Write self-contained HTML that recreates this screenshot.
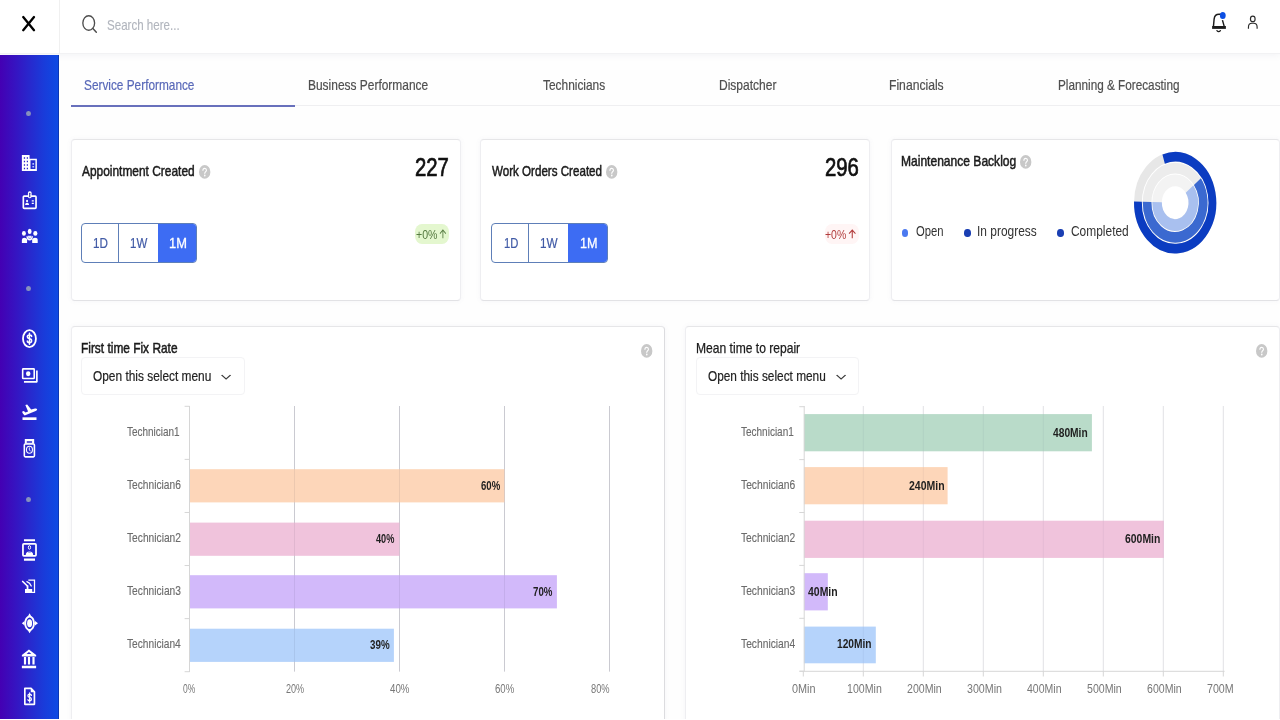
<!DOCTYPE html><html lang="en"><head><meta charset="utf-8"><title>Service Performance</title><style>
*{box-sizing:border-box;margin:0;padding:0}
html,body{width:1280px;height:720px;overflow:hidden;background:#fff}
body{font-family:"Liberation Sans",sans-serif;position:relative}
#app{position:absolute;left:0;top:0;width:1280px;height:720px;overflow:hidden;background:#fefefe}
.t{position:absolute;white-space:nowrap;line-height:1;transform-origin:0 0;font-weight:normal;font-style:normal;display:block;margin:0;padding:0}
.ic{position:absolute;display:block;overflow:visible}
header{position:absolute;left:0;top:0;width:1280px;height:54px;background:#fff;border-bottom:1px solid #f2f2f4;box-shadow:0 1px 7px rgba(110,120,150,.09)}
.logo{position:absolute;left:0;top:0;width:60px;height:54px;border-right:1px solid #f0f0f0}
nav.side{position:absolute;left:0;top:55px;width:59px;height:663.6px;background:linear-gradient(90deg,#4400b3 0%,#3515c2 28%,#2828cd 50%,#193cda 75%,#0d4be4 100%);box-shadow:inset -1px 0 0 rgba(10,30,120,.45)}
.dot{position:absolute;left:26.2px;width:4.6px;height:5.2px;border-radius:50%;background:#8791bd;filter:blur(.4px)}
.tabs{position:absolute;left:71px;top:62px;width:1209px;height:44px;border-bottom:1px solid #efeff1;list-style:none}
.tabs .on{position:absolute;left:0;top:42.8px;width:224px;height:2.1px;background:#6870bc}
.card{position:absolute;background:#fff;border:1px solid #eeeef1;border-top-color:#e6e6e8;border-bottom-color:#e2e2e5;border-radius:4px;box-shadow:0 0 5px rgba(110,120,160,.07)}
.bg{position:absolute;top:223.4px;height:39.8px;border:1px solid #5e7fb8;border-radius:4px;background:#fff;overflow:hidden}
.bg i{position:absolute;top:0;height:100%;display:block}
.bg .dv{width:1px;background:#5e7fb8}
.bg .act{background:#3d6cf3}
.badge{position:absolute;border-radius:7px/8px;filter:blur(.5px)}
.sel{position:absolute;top:357.2px;height:38px;border:1px solid #f3f3f5;border-radius:4px;background:#fff}
.bar{position:absolute}
.edge{position:absolute;left:0;top:718.6px;width:1280px;height:1.4px;background:#fff}
.gl{position:absolute;width:1px}
.ax{position:absolute;background:#d9d9d9}
.ldot{position:absolute;top:229px;width:6.4px;height:7.6px;border-radius:50%}
</style></head><body><div id="app">
<main>
<ul class="tabs"><li class="on"></li></ul>
<span class="t" style="left:84.21px;top:78px;font-size:14.5px;color:#5868b8;-webkit-text-stroke:0.2px #5868b8;transform:scaleX(0.8158);">Service Performance</span><span class="t" style="left:308.39px;top:78px;font-size:14.5px;color:#4f4f4f;-webkit-text-stroke:0.2px #4f4f4f;transform:scaleX(0.8238);">Business Performance</span><span class="t" style="left:543.32px;top:78px;font-size:14.5px;color:#4f4f4f;-webkit-text-stroke:0.2px #4f4f4f;transform:scaleX(0.8206);">Technicians</span><span class="t" style="left:719.29px;top:78px;font-size:14.5px;color:#4f4f4f;-webkit-text-stroke:0.2px #4f4f4f;transform:scaleX(0.8292);">Dispatcher</span><span class="t" style="left:889.38px;top:78px;font-size:14.5px;color:#4f4f4f;-webkit-text-stroke:0.2px #4f4f4f;transform:scaleX(0.8379);">Financials</span><span class="t" style="left:1058.15px;top:78px;font-size:14.5px;color:#4f4f4f;-webkit-text-stroke:0.2px #4f4f4f;transform:scaleX(0.8101);">Planning &amp; Forecasting</span>
<section class="card" style="left:70.5px;top:138.6px;width:390px;height:162px"></section>
<section class="card" style="left:480.4px;top:138.6px;width:389.6px;height:162px"></section>
<section class="card" style="left:890.5px;top:138.6px;width:389.2px;height:162px"></section>
<h3 class="t" style="left:81.60px;top:164px;font-size:14.5px;color:#1b1b1b;-webkit-text-stroke:0.5px #1b1b1b;transform:scaleX(0.8220);">Appointment Created</h3><svg class="ic" style="left:199.1px;top:164.7px;width:11.4px;height:13.8px" viewBox="0 0 24 24" preserveAspectRatio="none"><circle cx="12" cy="12" r="12" fill="#c8c8c8"/><path fill="none" stroke="#fff" stroke-width="2.300" stroke-linecap="round" d="M8.300 9.300c0-2.100 1.600-3.500 3.700-3.500s3.700 1.300 3.700 3.300c0 2.500-3.500 2.800-3.500 5.400"/><circle cx="12.200" cy="18.300" r="1.700" fill="#fff"/></svg><strong class="t" style="left:414.77px;top:155px;font-size:25.0px;color:#111;-webkit-text-stroke:0.7px #111;transform:scaleX(0.8131);">227</strong>
<div class="badge" style="left:415px;top:223.6px;width:34.4px;height:20.8px;background:#e4f7cf"></div><span class="t" style="left:415.88px;top:228px;font-size:13.4px;color:#557a40;transform:scaleX(0.7909);">+0%</span>
<svg class="ic" style="left:439.3px;top:229.0px;width:7.8px;height:9.6px" viewBox="0 0 24 24" preserveAspectRatio="none" ><path fill="none" stroke="#557a40" stroke-width="2.600" d="M12 23V3M3 11.500L12 2.500l9 9"/></svg>
<h3 class="t" style="left:492.42px;top:164px;font-size:14.5px;color:#1b1b1b;-webkit-text-stroke:0.5px #1b1b1b;transform:scaleX(0.7999);">Work Orders Created</h3><svg class="ic" style="left:606.3px;top:164.7px;width:11.4px;height:13.8px" viewBox="0 0 24 24" preserveAspectRatio="none"><circle cx="12" cy="12" r="12" fill="#c8c8c8"/><path fill="none" stroke="#fff" stroke-width="2.300" stroke-linecap="round" d="M8.300 9.300c0-2.100 1.600-3.500 3.700-3.500s3.700 1.300 3.700 3.300c0 2.500-3.500 2.800-3.500 5.400"/><circle cx="12.200" cy="18.300" r="1.700" fill="#fff"/></svg><strong class="t" style="left:825.30px;top:155px;font-size:25.0px;color:#111;-webkit-text-stroke:0.7px #111;transform:scaleX(0.8122);">296</strong>
<div class="badge" style="left:824.5px;top:223.6px;width:34.4px;height:20.8px;background:#fff5f5"></div><span class="t" style="left:825.34px;top:228px;font-size:13.4px;color:#b23b3b;transform:scaleX(0.7800);">+0%</span>
<svg class="ic" style="left:848.4px;top:229.0px;width:8.5px;height:9.6px" viewBox="0 0 24 24" preserveAspectRatio="none" ><path fill="none" stroke="#b23b3b" stroke-width="3" d="M12 23V3M3 11.500L12 2.500l9 9"/></svg>
<div class="bg" style="left:81.2px;width:115.8px"><i class="dv" style="left:36.1px"></i><i class="act" style="left:76px;width:41px"></i></div>
<span class="t" style="left:93.11px;top:236px;font-size:14.5px;color:#405aa6;-webkit-text-stroke:0.2px #405aa6;transform:scaleX(0.8053);">1D</span><span class="t" style="left:130.11px;top:236px;font-size:14.5px;color:#405aa6;-webkit-text-stroke:0.2px #405aa6;transform:scaleX(0.7922);">1W</span><span class="t" style="left:169.44px;top:236px;font-size:14.5px;color:#ffffff;-webkit-text-stroke:0.3px #ffffff;transform:scaleX(0.8888);">1M</span>
<div class="bg" style="left:491.2px;width:116.8px"><i class="dv" style="left:36.1px"></i><i class="act" style="left:76px;width:41px"></i></div>
<span class="t" style="left:504.11px;top:236px;font-size:14.5px;color:#405aa6;-webkit-text-stroke:0.2px #405aa6;transform:scaleX(0.7754);">1D</span><span class="t" style="left:540.11px;top:236px;font-size:14.5px;color:#405aa6;-webkit-text-stroke:0.2px #405aa6;transform:scaleX(0.8106);">1W</span><span class="t" style="left:579.67px;top:236px;font-size:14.5px;color:#ffffff;-webkit-text-stroke:0.3px #ffffff;transform:scaleX(0.8716);">1M</span>
<h3 class="t" style="left:901.41px;top:154px;font-size:14.5px;color:#1b1b1b;-webkit-text-stroke:0.5px #1b1b1b;transform:scaleX(0.8310);">Maintenance Backlog</h3><svg class="ic" style="left:1020.0px;top:155.3px;width:11.4px;height:13.8px" viewBox="0 0 24 24" preserveAspectRatio="none"><circle cx="12" cy="12" r="12" fill="#c8c8c8"/><path fill="none" stroke="#fff" stroke-width="2.300" stroke-linecap="round" d="M8.300 9.300c0-2.100 1.600-3.500 3.700-3.500s3.700 1.300 3.700 3.300c0 2.500-3.500 2.800-3.500 5.400"/><circle cx="12.200" cy="18.300" r="1.700" fill="#fff"/></svg>
<i class="ldot" style="left:901.8px;background:#4b79f0"></i>
<i class="ldot" style="left:964.4px;background:#1a3fb3"></i>
<i class="ldot" style="left:1057.4px;background:#1a3fb3"></i>
<span class="t" style="left:915.73px;top:224px;font-size:14.5px;color:#333;transform:scaleX(0.7773);">Open</span><span class="t" style="left:976.62px;top:224px;font-size:14.5px;color:#333;transform:scaleX(0.8233);">In progress</span><span class="t" style="left:1071.01px;top:224px;font-size:14.5px;color:#333;transform:scaleX(0.8234);">Completed</span>
<svg class="ic" style="left:1133.6px;top:151.7px;width:82.3px;height:101.4px" viewBox="0 0 100 100" preserveAspectRatio="none" ><circle cx="50" cy="50" r="45.25" fill="none" stroke="#e7e7e7" stroke-width="9.5"/><path d="M36.02 6.96A45.25 45.25 0 1 1 4.76 48.97" fill="none" stroke="#0b3cc1" stroke-width="9.5"/><circle cx="50" cy="50" r="34.1" fill="none" stroke="#ececec" stroke-width="10.6"/><path d="M77.05 29.24A34.1 34.1 0 1 1 15.91 49.23" fill="none" stroke="#3b69d0" stroke-width="10.6"/><circle cx="50" cy="50" r="22.0" fill="none" stroke="#f3f3f3" stroke-width="11.6"/><path d="M67.45 36.61A22.0 22.0 0 1 1 28.01 49.50" fill="none" stroke="#a9c0ef" stroke-width="11.6"/></svg>
<section class="card" style="left:70.5px;top:326px;width:594.4px;height:400px;border-right-color:#dcdcdf"></section>
<section class="card" style="left:685.3px;top:326px;width:594.4px;height:400px"></section>
<h3 class="t" style="left:81.15px;top:341px;font-size:14.5px;color:#1b1b1b;-webkit-text-stroke:0.5px #1b1b1b;transform:scaleX(0.8205);">First time Fix Rate</h3><svg class="ic" style="left:641.4px;top:344.0px;width:11.4px;height:13.8px" viewBox="0 0 24 24" preserveAspectRatio="none"><circle cx="12" cy="12" r="12" fill="#c8c8c8"/><path fill="none" stroke="#fff" stroke-width="2.300" stroke-linecap="round" d="M8.300 9.300c0-2.100 1.600-3.500 3.700-3.500s3.700 1.300 3.700 3.300c0 2.500-3.500 2.800-3.500 5.400"/><circle cx="12.200" cy="18.300" r="1.700" fill="#fff"/></svg><h3 class="t" style="left:696.08px;top:341px;font-size:14.5px;color:#1b1b1b;-webkit-text-stroke:0.25px #1b1b1b;transform:scaleX(0.8334);">Mean time to repair</h3><svg class="ic" style="left:1256.4px;top:344.0px;width:11.4px;height:13.8px" viewBox="0 0 24 24" preserveAspectRatio="none"><circle cx="12" cy="12" r="12" fill="#c8c8c8"/><path fill="none" stroke="#fff" stroke-width="2.300" stroke-linecap="round" d="M8.300 9.300c0-2.100 1.600-3.500 3.700-3.500s3.700 1.300 3.700 3.300c0 2.500-3.500 2.800-3.500 5.400"/><circle cx="12.200" cy="18.300" r="1.700" fill="#fff"/></svg>
<div class="sel" style="left:81.2px;width:163.4px"></div><span class="t" style="left:93.21px;top:369px;font-size:14.5px;color:#222;-webkit-text-stroke:0.2px #222;transform:scaleX(0.8200);">Open this select menu</span><svg class="ic" style="left:221.0px;top:373.6px;width:10.2px;height:6.2px" viewBox="0 0 24 24" preserveAspectRatio="none" ><path fill="none" stroke="#3a3a3a" stroke-width="3.400" d="M1.500 4l10.500 15L22.500 4"/></svg>
<div class="sel" style="left:696.2px;width:162.8px"></div><span class="t" style="left:707.86px;top:369px;font-size:14.5px;color:#222;-webkit-text-stroke:0.2px #222;transform:scaleX(0.8161);">Open this select menu</span><svg class="ic" style="left:835.8px;top:373.6px;width:10.2px;height:6.2px" viewBox="0 0 24 24" preserveAspectRatio="none" ><path fill="none" stroke="#3a3a3a" stroke-width="3.400" d="M1.500 4l10.500 15L22.500 4"/></svg>
<svg class="ic" style="left:0;top:0;width:1280px;height:720px" viewBox="0 0 1280 720"><rect x="294.00" y="406.00" width="1.00" height="265.60" fill="rgba(40,40,70,.18)"/><rect x="399.00" y="406.00" width="1.00" height="265.60" fill="rgba(40,40,70,.18)"/><rect x="504.00" y="406.00" width="1.00" height="265.60" fill="rgba(40,40,70,.18)"/><rect x="609.00" y="406.00" width="1.00" height="265.60" fill="rgba(40,40,70,.18)"/><rect x="189.80" y="469.20" width="314.70" height="33.20" fill="#fdd6b9"/><rect x="189.80" y="522.60" width="209.80" height="33.20" fill="#f0c3dc"/><rect x="189.80" y="575.20" width="367.10" height="33.20" fill="#d2b9fa"/><rect x="189.80" y="628.70" width="204.10" height="33.20" fill="#b5d3fb"/><rect x="294.00" y="406.00" width="1.00" height="265.60" fill="rgba(40,40,70,.08)"/><rect x="399.00" y="406.00" width="1.00" height="265.60" fill="rgba(40,40,70,.08)"/><rect x="504.00" y="406.00" width="1.00" height="265.60" fill="rgba(40,40,70,.08)"/><rect x="609.00" y="406.00" width="1.00" height="265.60" fill="rgba(40,40,70,.08)"/><rect x="189.00" y="406.00" width="1.00" height="266.00" fill="#d6d6d6"/><rect x="184.60" y="405.80" width="5.00" height="1.00" fill="#d6d6d6"/><rect x="184.60" y="458.88" width="5.00" height="1.00" fill="#d6d6d6"/><rect x="184.60" y="511.96" width="5.00" height="1.00" fill="#d6d6d6"/><rect x="184.60" y="565.04" width="5.00" height="1.00" fill="#d6d6d6"/><rect x="184.60" y="618.12" width="5.00" height="1.00" fill="#d6d6d6"/><rect x="184.60" y="671.20" width="5.00" height="1.00" fill="#d6d6d6"/><rect x="862.80" y="406.00" width="1.00" height="265.00" fill="rgba(40,40,70,.09)"/><rect x="922.80" y="406.00" width="1.00" height="265.00" fill="rgba(40,40,70,.09)"/><rect x="982.80" y="406.00" width="1.00" height="265.00" fill="rgba(40,40,70,.09)"/><rect x="1042.80" y="406.00" width="1.00" height="265.00" fill="rgba(40,40,70,.09)"/><rect x="1102.80" y="406.00" width="1.00" height="265.00" fill="rgba(40,40,70,.09)"/><rect x="1162.80" y="406.00" width="1.00" height="265.00" fill="rgba(40,40,70,.09)"/><rect x="1222.80" y="406.00" width="1.00" height="265.00" fill="rgba(40,40,70,.09)"/><rect x="803.90" y="414.10" width="288.00" height="37.20" fill="#b9dbc9"/><rect x="803.90" y="467.10" width="143.70" height="37.20" fill="#fdd6b9"/><rect x="803.90" y="520.70" width="359.90" height="37.20" fill="#f0c3dc"/><rect x="803.90" y="573.20" width="23.90" height="37.20" fill="#d2b9fa"/><rect x="803.90" y="626.60" width="71.90" height="36.70" fill="#b5d3fb"/><rect x="862.80" y="406.00" width="1.00" height="265.00" fill="rgba(40,40,70,.05)"/><rect x="922.80" y="406.00" width="1.00" height="265.00" fill="rgba(40,40,70,.05)"/><rect x="982.80" y="406.00" width="1.00" height="265.00" fill="rgba(40,40,70,.05)"/><rect x="1042.80" y="406.00" width="1.00" height="265.00" fill="rgba(40,40,70,.05)"/><rect x="1102.80" y="406.00" width="1.00" height="265.00" fill="rgba(40,40,70,.05)"/><rect x="1162.80" y="406.00" width="1.00" height="265.00" fill="rgba(40,40,70,.05)"/><rect x="1222.80" y="406.00" width="1.00" height="265.00" fill="rgba(40,40,70,.05)"/><rect x="803.70" y="406.00" width="1.00" height="265.50" fill="#d6d6d6"/><rect x="799.30" y="406.20" width="5.00" height="1.00" fill="#d6d6d6"/><rect x="799.30" y="459.10" width="5.00" height="1.00" fill="#d6d6d6"/><rect x="799.30" y="512.00" width="5.00" height="1.00" fill="#d6d6d6"/><rect x="799.30" y="564.90" width="5.00" height="1.00" fill="#d6d6d6"/><rect x="799.30" y="617.80" width="5.00" height="1.00" fill="#d6d6d6"/><rect x="799.30" y="670.70" width="5.00" height="1.00" fill="#d6d6d6"/><rect x="799.60" y="670.80" width="425.00" height="1.00" fill="#d6d6d6"/><rect x="802.80" y="671.00" width="1.00" height="5.50" fill="#d6d6d6"/><rect x="862.80" y="671.00" width="1.00" height="5.50" fill="#d6d6d6"/><rect x="922.80" y="671.00" width="1.00" height="5.50" fill="#d6d6d6"/><rect x="982.80" y="671.00" width="1.00" height="5.50" fill="#d6d6d6"/><rect x="1042.80" y="671.00" width="1.00" height="5.50" fill="#d6d6d6"/><rect x="1102.80" y="671.00" width="1.00" height="5.50" fill="#d6d6d6"/><rect x="1162.80" y="671.00" width="1.00" height="5.50" fill="#d6d6d6"/><rect x="1222.80" y="671.00" width="1.00" height="5.50" fill="#d6d6d6"/></svg>
<span class="t" style="left:126.76px;top:425px;font-size:13.6px;color:#6c6c6c;-webkit-text-stroke:0.15px #6c6c6c;transform:scaleX(0.7320);">Technician1</span><span class="t" style="left:126.84px;top:478px;font-size:13.6px;color:#6c6c6c;-webkit-text-stroke:0.15px #6c6c6c;transform:scaleX(0.7503);">Technician6</span><span class="t" style="left:126.75px;top:531px;font-size:13.6px;color:#6c6c6c;-webkit-text-stroke:0.15px #6c6c6c;transform:scaleX(0.7520);">Technician2</span><span class="t" style="left:126.75px;top:584px;font-size:13.6px;color:#6c6c6c;-webkit-text-stroke:0.15px #6c6c6c;transform:scaleX(0.7509);">Technician3</span><span class="t" style="left:126.71px;top:637px;font-size:13.6px;color:#6c6c6c;-webkit-text-stroke:0.15px #6c6c6c;transform:scaleX(0.7486);">Technician4</span><span class="t" style="left:182.98px;top:683px;font-size:12.4px;color:#787878;transform:scaleX(0.6873);">0%</span><span class="t" style="left:285.79px;top:683px;font-size:12.4px;color:#787878;transform:scaleX(0.7335);">20%</span><span class="t" style="left:389.80px;top:683px;font-size:12.4px;color:#787878;transform:scaleX(0.7854);">40%</span><span class="t" style="left:495.28px;top:683px;font-size:12.4px;color:#787878;transform:scaleX(0.7776);">60%</span><span class="t" style="left:590.99px;top:683px;font-size:12.4px;color:#787878;transform:scaleX(0.7514);">80%</span><span class="t" style="left:480.73px;top:480px;font-size:12.4px;color:#1f1f1f;font-weight:bold;transform:scaleX(0.7731);">60%</span><span class="t" style="left:376.42px;top:533px;font-size:12.4px;color:#1f1f1f;font-weight:bold;transform:scaleX(0.7391);">40%</span><span class="t" style="left:533.36px;top:586px;font-size:12.4px;color:#1f1f1f;font-weight:bold;transform:scaleX(0.7815);">70%</span><span class="t" style="left:369.95px;top:639px;font-size:12.4px;color:#1f1f1f;font-weight:bold;transform:scaleX(0.7897);">39%</span>
<span class="t" style="left:741.04px;top:425px;font-size:13.6px;color:#6c6c6c;-webkit-text-stroke:0.15px #6c6c6c;transform:scaleX(0.7354);">Technician1</span><span class="t" style="left:740.95px;top:478px;font-size:13.6px;color:#6c6c6c;-webkit-text-stroke:0.15px #6c6c6c;transform:scaleX(0.7559);">Technician6</span><span class="t" style="left:741.03px;top:531px;font-size:13.6px;color:#6c6c6c;-webkit-text-stroke:0.15px #6c6c6c;transform:scaleX(0.7537);">Technician2</span><span class="t" style="left:740.95px;top:584px;font-size:13.6px;color:#6c6c6c;-webkit-text-stroke:0.15px #6c6c6c;transform:scaleX(0.7559);">Technician3</span><span class="t" style="left:740.95px;top:637px;font-size:13.6px;color:#6c6c6c;-webkit-text-stroke:0.15px #6c6c6c;transform:scaleX(0.7549);">Technician4</span><span class="t" style="left:792.40px;top:683px;font-size:12.4px;color:#787878;transform:scaleX(0.8762);">0Min</span><span class="t" style="left:847.13px;top:683px;font-size:12.4px;color:#787878;transform:scaleX(0.8557);">100Min</span><span class="t" style="left:906.83px;top:683px;font-size:12.4px;color:#787878;transform:scaleX(0.8556);">200Min</span><span class="t" style="left:966.89px;top:683px;font-size:12.4px;color:#787878;transform:scaleX(0.8609);">300Min</span><span class="t" style="left:1026.71px;top:683px;font-size:12.4px;color:#787878;transform:scaleX(0.8507);">400Min</span><span class="t" style="left:1087.16px;top:683px;font-size:12.4px;color:#787878;transform:scaleX(0.8550);">500Min</span><span class="t" style="left:1146.99px;top:683px;font-size:12.4px;color:#787878;transform:scaleX(0.8530);">600Min</span><span class="t" style="left:1207.14px;top:683px;font-size:12.4px;color:#787878;transform:scaleX(0.8610);">700M</span><span class="t" style="left:1053.42px;top:427px;font-size:12.4px;color:#1f1f1f;font-weight:bold;transform:scaleX(0.8254);">480Min</span><span class="t" style="left:909.00px;top:480px;font-size:12.4px;color:#1f1f1f;font-weight:bold;transform:scaleX(0.8463);">240Min</span><span class="t" style="left:1125.16px;top:533px;font-size:12.4px;color:#1f1f1f;font-weight:bold;transform:scaleX(0.8422);">600Min</span><span class="t" style="left:807.92px;top:586px;font-size:12.4px;color:#1f1f1f;font-weight:bold;transform:scaleX(0.8438);">40Min</span><span class="t" style="left:837.01px;top:638px;font-size:12.4px;color:#1f1f1f;font-weight:bold;transform:scaleX(0.8238);">120Min</span>
</main>
<header><div class="logo">
<svg class="ic" style="left:0px;top:4px;width:58px;height:40px" viewBox="0 0 1044 720" preserveAspectRatio="none"><path fill="none" stroke="#000" stroke-width="42" stroke-linecap="round" d="M418 235L612 471M612 235L418 471"/></svg>
</div>
<svg class="ic" style="left:60px;top:4px;width:60px;height:40px" viewBox="0 0 1080 720" preserveAspectRatio="none"><ellipse cx="517" cy="342" rx="106" ry="131" fill="none" stroke="#4d4d4d" stroke-width="24"/><path stroke="#4d4d4d" stroke-width="26" stroke-linecap="round" d="M592 440l62 70"/></svg>
<span class="t ph" style="left:107.03px;top:18px;font-size:14.5px;color:#b2b6be;-webkit-text-stroke:0.15px #b2b6be;transform:scaleX(0.7975);">Search here...</span>
<svg class="ic" style="left:1200px;top:4px;width:70px;height:40px" viewBox="0 0 1260 720" preserveAspectRatio="none"><path fill="none" stroke="#1c1c1c" stroke-width="26" stroke-linejoin="round" d="M242 402L254 272Q264 186 342 186H400M404 290L436 402"/><path fill="#1c1c1c" d="M218 396h248v52H218z"/><path fill="none" stroke="#1c1c1c" stroke-width="24" stroke-linecap="round" d="M304 480q32 36 64 0"/><ellipse cx="410" cy="207" rx="52" ry="63" fill="#0d4fe3"/></svg>
<svg class="ic" style="left:1200px;top:4px;width:70px;height:40px" viewBox="0 0 1260 720" preserveAspectRatio="none"><ellipse cx="950" cy="268" rx="42" ry="50" fill="none" stroke="#2b2b2b" stroke-width="21"/><path fill="none" stroke="#2b2b2b" stroke-width="21" d="M872 446V412Q872 346 936 346H964Q1028 346 1028 412V446"/></svg>
</header>
<nav class="side">
<i class="dot" style="top:56.2px"></i>
<i class="dot" style="top:230.8px"></i>
<i class="dot" style="top:442.2px"></i>
<svg class="ic" style="left:10px;top:93px;width:40px;height:30px" viewBox="0 0 960 720" preserveAspectRatio="none"><path fill="#fff" fill-rule="evenodd" d="M285 165H470V255H645V550H285ZM332 222h30v34h-30zM332 306h30v34h-30zM332 392h30v34h-30zM332 476h30v34h-30zM402 222h30v34h-30zM402 306h30v34h-30zM402 392h30v34h-30zM402 476h30v34h-30zM492 295H610V505H492Z"/><path fill="#b9c3ff" d="M538 362h40v40h-40zM538 430h40v40h-40z"/></svg>
<svg class="ic" style="left:10px;top:130px;width:40px;height:30px" viewBox="0 0 960 720" preserveAspectRatio="none"><rect x="320" y="266" width="305" height="294" rx="22" fill="none" stroke="#fff" stroke-width="40"/><rect x="430" y="150" width="90" height="165" rx="40" fill="#fff"/><rect x="461" y="188" width="26" height="105" rx="12" fill="#2a1f9e"/><ellipse cx="410" cy="385" rx="24" ry="30" fill="#fff"/><path fill="#fff" d="M362 482q0-55 48-55t48 55zM522 365h50v32h-50zM522 425h50v32h-50z"/></svg>
<svg class="ic" style="left:10px;top:166px;width:40px;height:30px" viewBox="0 0 960 720" preserveAspectRatio="none"><ellipse cx="472" cy="250" rx="46" ry="62" fill="#fff"/><ellipse cx="334" cy="298" rx="47" ry="58" fill="#fff"/><ellipse cx="608" cy="298" rx="50" ry="58" fill="#fff"/><path fill="#fff" d="M285 530V455q0-55 62-55 50 0 65 40l-2 90zM665 530V455q0-55-66-55-52 0-68 40l2 90z"/><path fill="none" stroke="#fff" stroke-width="34" d="M408 365q10 85 64 85t64-85"/><path fill="#e6e9ff" d="M425 355h94q-5 70-47 70t-47-70z"/></svg>
<svg class="ic" style="left:10px;top:268px;width:40px;height:30px" viewBox="0 0 960 720" preserveAspectRatio="none"><ellipse cx="467" cy="375" rx="155" ry="203" fill="none" stroke="#fff" stroke-width="44"/><path fill="none" stroke="#fff" stroke-width="36" stroke-linecap="round" d="M519 322.8Q519 286 467 286Q415 286 415 332.0Q415 370.64 467 378Q519 385.36 519 424.0Q519 470 467 470Q415 470 415 433.2M467 245v265"/></svg>
<svg class="ic" style="left:10px;top:306px;width:40px;height:30px" viewBox="0 0 960 720" preserveAspectRatio="none"><rect x="304" y="189" width="277" height="232" rx="14" fill="none" stroke="#fff" stroke-width="38"/><ellipse cx="437" cy="305" rx="54" ry="58" fill="#fff"/><path fill="none" stroke="#fff" stroke-width="40" stroke-linejoin="round" d="M645 225V500H335"/></svg>
<svg class="ic" style="left:10px;top:342px;width:40px;height:30px" viewBox="0 0 960 720" preserveAspectRatio="none"><path fill="#fff" d="M288 352l42-14 42 36 62-28-66-156 44-8 96 118 92-22q42-6 52 18 2 28-36 42L352 442l-40-38z"/><path fill="#fff" d="M300 488h336v64H300z"/></svg>
<svg class="ic" style="left:10px;top:378px;width:40px;height:30px" viewBox="0 0 960 720" preserveAspectRatio="none"><path fill="#fff" fill-rule="evenodd" d="M355 145H580V255H355ZM402 198H530V236H402Z"/><rect x="344" y="262" width="242" height="310" rx="24" fill="none" stroke="#fff" stroke-width="38"/><ellipse cx="467" cy="402" rx="72" ry="84" fill="none" stroke="#fff" stroke-width="26"/><path fill="none" stroke="#fff" stroke-width="22" d="M464 345v62l34 34"/></svg>
<svg class="ic" style="left:10px;top:479px;width:40px;height:30px" viewBox="0 0 960 720" preserveAspectRatio="none"><path fill="#fff" d="M335 125h265v50H335zM335 590h265v50H335z"/><rect x="311" y="236" width="313" height="288" rx="22" fill="none" stroke="#fff" stroke-width="42"/><ellipse cx="467" cy="322" rx="27" ry="44" fill="none" stroke="#fff" stroke-width="24"/><path fill="#fff" d="M378 505q0-88 89-88t89 88z"/><path fill="#4a52d8" d="M436 428h62v16h-62z"/></svg>
<svg class="ic" style="left:10px;top:517px;width:40px;height:30px" viewBox="0 0 960 720" preserveAspectRatio="none"><path fill="none" stroke="#fff" stroke-width="30" d="M440 196H588V486H525"/><path fill="#fff" d="M360 405h172v100H360zM400 325h42v85h-42z"/><path fill="none" stroke="#fff" stroke-width="40" stroke-linecap="round" d="M305 228l112 108"/><path fill="none" stroke="#fff" stroke-width="30" stroke-linecap="round" d="M405 232q75 30 105 105"/></svg>
<svg class="ic" style="left:10px;top:553px;width:40px;height:30px" viewBox="0 0 960 720" preserveAspectRatio="none"><ellipse cx="470" cy="366" rx="106" ry="160" fill="none" stroke="#fff" stroke-width="46"/><ellipse cx="470" cy="366" rx="60" ry="96" fill="#fff"/><path fill="#fff" d="M470 128l46 80h-92zM470 606l46-80h-92zM284 366l66-52v104zM672 366l-72-52v104z"/></svg>
<svg class="ic" style="left:10px;top:589px;width:40px;height:30px" viewBox="0 0 960 720" preserveAspectRatio="none"><path fill="#fff" fill-rule="evenodd" d="M455 132L628 262V302H285V262ZM455 192L512 238H398Z"/><path fill="#fff" d="M334 312h52v180h-52zM430 312h52v180h-52zM538 312h52v180h-52zM285 520h342v62H285z"/></svg>
<svg class="ic" style="left:10px;top:626px;width:40px;height:30px" viewBox="0 0 960 720" preserveAspectRatio="none"><path fill="none" stroke="#fff" stroke-width="40" stroke-linejoin="round" d="M356 176H505L586 258V560H356Z"/><path fill="#fff" d="M498 160l106 108H498z"/><path fill="none" stroke="#fff" stroke-width="30" stroke-linecap="round" d="M514 345.8Q514 313 472 313Q430 313 430 354.0Q430 388.44 472 395Q514 401.56 514 436.0Q514 477 472 477Q430 477 430 444.2M472 285v222"/></svg>
</nav>
<div class="edge"></div>
</div></body></html>
